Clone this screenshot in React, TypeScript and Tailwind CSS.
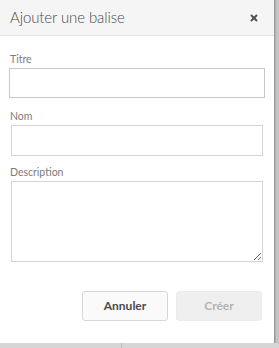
import { X } from 'lucide-react';

function Field({ label, children }: { label: string; children: React.ReactNode }) {
  return (
    <div className="flex flex-col">
      <label className="text-[10.5px] leading-[14px] text-[#7c7c7c] mb-[2px]">{label}</label>
      {children}
    </div>
  );
}

export default function App() {
  return (
    <div
      className="w-[279px] h-[348px] bg-[#d4d4d4] flex flex-col overflow-hidden"
      style={{ fontFamily: 'Lato, "Open Sans", sans-serif' }}
    >
      <div className="flex h-[343px]">
        {/* Dialog */}
        <div className="w-[275px] h-full bg-white border-r border-[#9a9a9a] flex flex-col">
          <div className="h-[36px] bg-[#f5f5f5] border-b border-[#e3e3e3] flex items-center justify-between pl-[10px] pr-[15px]">
            <span className="text-[15px] font-light text-[#4b4b4b] tracking-[-0.1px]">Ajouter une balise</span>
            <X className="w-[10px] h-[10px] text-[#505050]" strokeWidth={4.5} />
          </div>

          <div className="flex flex-col pt-[16px] px-[10px]">
            <Field label="Titre">
              <input className="h-[30px] w-[256px] -ml-[1px] border border-[#c8c8c8] bg-white outline-none" />
            </Field>
            <div className="h-[11px]" />
            <Field label="Nom">
              <input className="h-[31px] w-[252px] ml-[1px] border border-[#d4d4d4] bg-white outline-none" />
            </Field>
            <div className="h-[9px]" />
            <Field label="Description">
              <textarea className="h-[81px] w-[252px] ml-[1px] border border-[#d4d4d4] bg-white outline-none resize-y block" />
            </Field>
          </div>

          <div className="flex justify-end gap-[8px] pr-[12px] mt-[29px]">
            <button className="w-[86px] h-[30px] rounded-[3px] border border-[#d6d6d6] bg-[#fafafa] text-[12px] font-bold text-[#4b4b4b]">
              Annuler
            </button>
            <button className="w-[86px] h-[30px] rounded-[3px] border border-[#ebebeb] bg-[#efefef] text-[12px] font-bold text-[#b4b4b4]">
              Créer
            </button>
          </div>
        </div>
        {/* Side strip */}
        <div className="flex-1 bg-[#c4c4c4] border-l border-[#b0b0b0]" />
      </div>
      <div className="flex-1 flex">
        <div className="w-[122px] border-r border-[#bdbdbd] bg-[#d6d6d6]" />
        <div className="flex-1 bg-[#d6d6d6]" />
      </div>
    </div>
  );
}
